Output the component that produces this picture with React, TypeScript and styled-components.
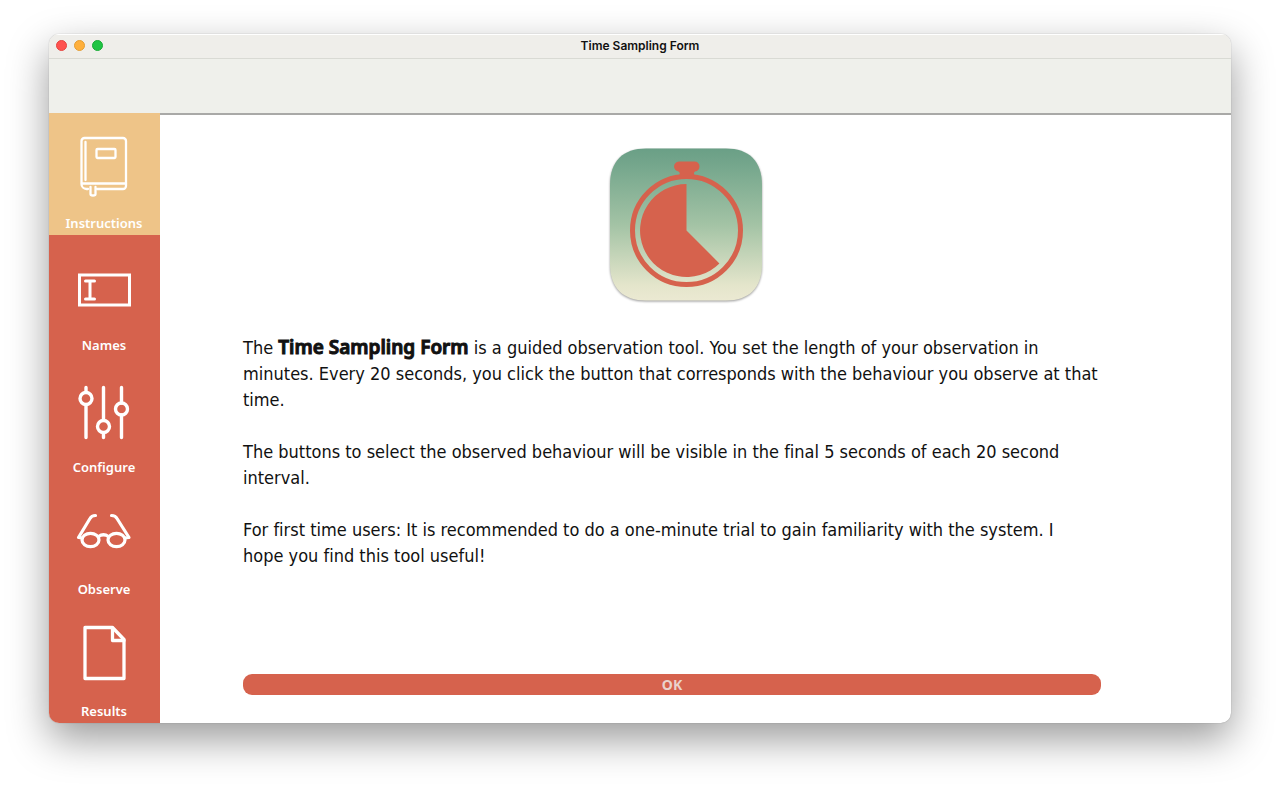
import React from "react";
import styled, { createGlobalStyle } from "styled-components";

const coral = "#d6624d";

const GlobalStyle = createGlobalStyle`
  * { box-sizing: border-box; }
  body {
    margin: 0;
    background: #ffffff;
    font-family: "Noto Sans", "Open Sans", sans-serif;
    color: #111111;
  }
`;

const Desktop = styled.div`
  padding: 34px 49px 65px;
`;

const AppWindow = styled.div`
  display: flex;
  flex-direction: column;
  border-radius: 10px;
  overflow: hidden;
  background: #ffffff;
  box-shadow: 0 0 1px rgba(0, 0, 0, 0.4), 0 16px 40px rgba(0, 0, 0, 0.4);
`;

const TitleBar = styled.header`
  display: grid;
  grid-template-columns: 1fr auto 1fr;
  align-items: center;
  height: 25px;
  padding: 0 7px 2px;
  background: #efeeea;
  border-top: 1px solid #ffffff;
  border-bottom: 1px solid #d9dad4;
`;

const Lights = styled.div`
  display: flex;
  gap: 7px;
`;

const Light = styled.button<{ $fill: string; $edge: string }>`
  width: 11px;
  height: 11px;
  padding: 0;
  border: 1px solid ${(p) => p.$edge};
  border-radius: 50%;
  background: ${(p) => p.$fill};
`;

const Title = styled.h1`
  margin: 0;
  font: 600 12px/14px Inter, "Liberation Sans", sans-serif;
`;

const Toolbar = styled.div`
  height: 54px;
  background: #eff0eb;
`;

const Columns = styled.div`
  display: flex;
`;

const Sidebar = styled.nav`
  display: flex;
  flex-direction: column;
  flex: none;
  width: 111px;
  background: ${coral};
`;

const NavButton = styled.button<{ $active?: boolean }>`
  display: flex;
  flex-direction: column;
  align-items: center;
  justify-content: space-between;
  height: 122px;
  padding: 22px 1px 3px 0;
  border: 0;
  background: ${(p) => (p.$active ? "#eec488" : "transparent")};
  color: #ffffff;
  font: 600 13px/18px "Noto Sans", "Open Sans", sans-serif;
`;

const Glyph = styled.svg`
  display: block;
  width: 64px;
  height: 64px;
  fill: none;
  stroke: currentColor;
  stroke-linecap: round;
  stroke-linejoin: round;
`;

const Main = styled.main`
  display: flex;
  flex: 1;
  flex-direction: column;
  padding: 33px 103px 28px 83px;
  border-top: 2px solid #a9a9a7;
`;

const Logo = styled.svg`
  display: block;
  align-self: center;
  width: 156px;
  height: 156px;
`;

const Copy = styled.div`
  margin: 31px 29px 0 0;
  font-family: "DejaVu Sans Condensed", "Noto Sans", sans-serif;
  font-size: 18px;
  line-height: 26px;
  font-variant-ligatures: none;
`;

const Paragraph = styled.p`
  margin: 0 0 26px;
`;

const Name = styled.strong`
  font-family: "Noto Sans", "Open Sans", sans-serif;
  font-size: 19px;
  font-weight: 600;
  line-height: 20px;
  -webkit-text-stroke: 1px #111111;
`;

const OkButton = styled.button`
  height: 21px;
  margin: auto 27px 0 0;
  padding: 0;
  border: 0;
  border-radius: 9px;
  background: ${coral};
  color: #ead2cc;
  font: 700 14px/20px "Noto Sans", "Open Sans", sans-serif;
`;

const BookIcon = () => (
  <Glyph viewBox="0 0 64 64" strokeWidth="2.300" aria-hidden="true">
    <path d="M16 54h-1.500a5 5 0 0 1-5-5V6a3 3 0 0 1 3-3H51a3 3 0 0 1 3 3v45a3 3 0 0 1-3 3H25" />
    <path d="M13.500 7v38M10 48.500h44" />
    <rect x="24.500" y="14" width="19" height="9" rx="1" />
    <path d="M18.500 52v7q0 1.500 2.500 1.500t2.500-1.500V52" />
  </Glyph>
);

const NameFieldIcon = () => (
  <Glyph viewBox="0 0 64 64" strokeWidth="3" aria-hidden="true">
    <rect x="7.500" y="18" width="50" height="30" strokeLinejoin="miter" />
    <path d="M13.500 24h9M13.500 42h9M18 24v18" />
  </Glyph>
);

const SlidersIcon = () => (
  <Glyph viewBox="0.500 0 64 64" strokeWidth="3.400" aria-hidden="true">
    <path d="M14.500 8.500v4.500M14.500 26v32.500M32 8.500V41M32 54v4.500M50 8.500V24M50 36v22.500" />
    <circle cx="14.500" cy="19.500" r="6" />
    <circle cx="32" cy="47.500" r="6" />
    <circle cx="50" cy="30" r="6" />
  </Glyph>
);

const GlassesIcon = () => (
  <Glyph viewBox="0.500 0 64 64" strokeWidth="3.200" aria-hidden="true">
    <ellipse cx="19" cy="39" rx="8.500" ry="6.700" />
    <ellipse cx="45" cy="39" rx="8.500" ry="6.700" />
    <path d="M27 35.500q5-3.500 10 0" />
    <path d="M24 14.500q-4 0-5.500 3L7 36.500l4 .5M40 14.500q4 0 5.500 3L57.500 36.500l-4 .5" />
  </Glyph>
);

const PageIcon = () => (
  <Glyph viewBox="0 2 64 64" strokeWidth="3.300" aria-hidden="true">
    <path d="M13 6.500h27.500L52 18.500v39H13z" />
    <path d="M40.500 7v12.500h11.500" />
  </Glyph>
);

const navItems = [
  { label: "Instructions", Icon: BookIcon },
  { label: "Names", Icon: NameFieldIcon },
  { label: "Configure", Icon: SlidersIcon },
  { label: "Observe", Icon: GlassesIcon },
  { label: "Results", Icon: PageIcon },
];

const TimerLogo = () => (
  <Logo viewBox="0 0 156 156" role="img" aria-label="Stopwatch">
    <defs>
      <linearGradient id="tile" x1="0" y1="0" x2="0" y2="1">
        <stop offset="0" stopColor="#6a9f86" />
        <stop offset="0.120" stopColor="#76a78d" />
        <stop offset="0.500" stopColor="#a3c3a5" />
        <stop offset="0.900" stopColor="#e4e5cb" />
        <stop offset="1" stopColor="#ebe9d2" />
      </linearGradient>
      <filter id="tileShadow" x="-5%" y="-5%" width="110%" height="110%" colorInterpolationFilters="sRGB">
        <feDropShadow dx="0" dy="1" stdDeviation="0.900" floodOpacity="0.400" />
      </filter>
    </defs>
    <path
      d="M38 0.500H118C141 0.500 154 13 154 37V116C154 140 141 152.500 118 152.500H38C15 152.500 2 140 2 116V37C2 13 15 0.500 38 0.500z"
      fill="url(#tile)"
      filter="url(#tileShadow)"
    />
    <circle cx="78.500" cy="82.500" r="54" fill="none" stroke={coral} strokeWidth="5" />
    <path d="M78.500 82.500V36A46.500 46.500 0 1 0 111.400 115.400z" fill={coral} />
    <path
      d="M71 13.500H87C93 14 93 23 87 23.500C85.500 24 86 26 86.500 28H71C72 26 72 24 70.500 23.500C64.500 22.500 64.500 14 71 13.500z"
      fill={coral}
    />
  </Logo>
);

export default function App() {
  return (
    <>
      <GlobalStyle />
      <Desktop>
        <AppWindow>
          <TitleBar>
            <Lights>
              <Light $fill="#ff524f" $edge="#e4453f" aria-label="Close" />
              <Light $fill="#ffb03c" $edge="#e39d33" aria-label="Minimise" />
              <Light $fill="#20c444" $edge="#19ab36" aria-label="Zoom" />
            </Lights>
            <Title>Time Sampling Form</Title>
          </TitleBar>
          <Toolbar />
          <Columns>
            <Sidebar>
              {navItems.map(({ label, Icon }, i) => (
                <NavButton key={label} $active={i === 0}>
                  <Icon />
                  {label}
                </NavButton>
              ))}
            </Sidebar>
            <Main>
              <TimerLogo />
              <Copy>
                <Paragraph>
                  The <Name>Time Sampling Form</Name> is a guided observation
                  tool. You set the length of your observation in minutes.
                  Every 20 seconds, you click the button that corresponds with
                  the behaviour you observe at that time.
                </Paragraph>
                <Paragraph>
                  The buttons to select the observed behaviour will be visible
                  in the final 5 seconds of each 20 second interval.
                </Paragraph>
                <Paragraph>
                  For first time users: It is recommended to do a one-minute
                  trial to gain familiarity with the system. I hope you find
                  this tool useful!
                </Paragraph>
              </Copy>
              <OkButton>OK</OkButton>
            </Main>
          </Columns>
        </AppWindow>
      </Desktop>
    </>
  );
}
